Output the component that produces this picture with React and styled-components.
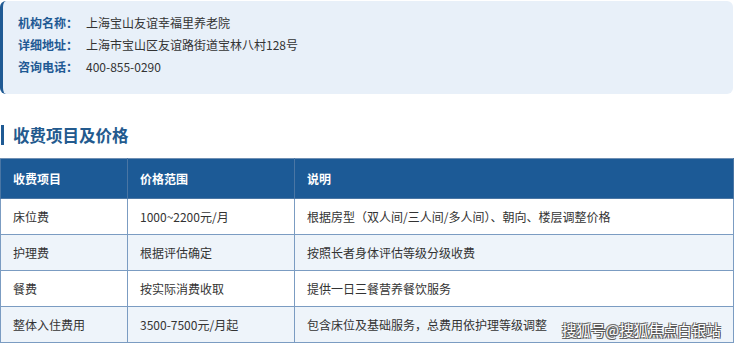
import React from 'react';
import styled, { createGlobalStyle } from 'styled-components';

const Global = createGlobalStyle`
  body {
    margin: 0;
    background: #fff;
    font-family: "Noto Sans CJK SC", "Noto Sans", sans-serif;
  }
`

const Page = styled.div`
  position: relative;
  width: 740px;
  height: 347px;
  overflow: hidden;
  padding-top: 1px;
  box-sizing: border-box;
`

const InfoBox = styled.div`
  width: 733px;
  box-sizing: border-box;
  background: #e8f0f9;
  border-left: 3px solid #1f5a94;
  border-radius: 6px;
  padding: 10px 15px 17px;
`

const InfoRow = styled.div`
  display: flex;
  height: 22px;
  align-items: center;
  font-size: 12px;
`

const Label = styled.span`
  width: 68px;
  color: #1f5a94;
  font-weight: 700;
`

const Value = styled.span`
  color: #333;
`

const Heading = styled.h2`
  margin: 31px 0 13px 1px;
  height: 20px;
  border-left: 3px solid #1f5a94;
  padding-left: 9px;
  font-size: 16.5px;
  line-height: 20px;
  font-weight: 700;
  color: #235a8e;
`

const Table = styled.table`
  width: 734px;
  border-collapse: collapse;
  table-layout: fixed;
  font-size: 12px;
  color: #333;

  th, td {
    border: 1px solid #7b9cc2;
    text-align: left;
    padding: 0 0 0 12px;
  }
  th {
    background: #1c5a96;
    color: #fff;
    font-weight: 700;
    height: 39px;
    border-color: #4a76a4;
    border-top-color: #6f8fb3;
  }
  td {
    height: 35px;
  }
`

const Row = styled.tr`
  background: ${p => (p.$alt ? '#eef4fa' : '#fff')};
`

const Watermark = styled.div`
  position: absolute;
  left: 562px;
  top: 320px;
  font-size: 14.5px;
  line-height: 20px;
  color: #fff;
  text-shadow: 1px 1px 0 #555, -1px -1px 0 #666, 1px -1px 0 #666, -1px 1px 0 #666;
`

const rows = [
  ['床位费', '1000~2200元/月', '根据房型（双人间/三人间/多人间）、朝向、楼层调整价格'],
  ['护理费', '根据评估确定', '按照长者身体评估等级分级收费'],
  ['餐费', '按实际消费收取', '提供一日三餐营养餐饮服务'],
  ['整体入住费用', '3500-7500元/月起', '包含床位及基础服务，总费用依护理等级调整'],
]

const App = () => {
  return (
    <Page>
      <Global />
      <InfoBox>
        <InfoRow><Label>机构名称：</Label><Value>上海宝山友谊幸福里养老院</Value></InfoRow>
        <InfoRow><Label>详细地址：</Label><Value>上海市宝山区友谊路街道宝林八村128号</Value></InfoRow>
        <InfoRow><Label>咨询电话：</Label><Value>400-855-0290</Value></InfoRow>
      </InfoBox>
      <Heading>收费项目及价格</Heading>
      <Table>
        <colgroup>
          <col style={{ width: 127 }} />
          <col style={{ width: 167 }} />
          <col />
        </colgroup>
        <thead>
          <tr>
            <th>收费项目</th>
            <th>价格范围</th>
            <th>说明</th>
          </tr>
        </thead>
        <tbody>
          {rows.map((r, i) => (
            <Row key={r[0]} $alt={i % 2 === 1}>
              <td>{r[0]}</td>
              <td>{r[1]}</td>
              <td>{r[2]}</td>
            </Row>
          ))}
        </tbody>
      </Table>
      <Watermark>搜狐号@搜狐焦点白银站</Watermark>
    </Page>
  );
};

export default App;
